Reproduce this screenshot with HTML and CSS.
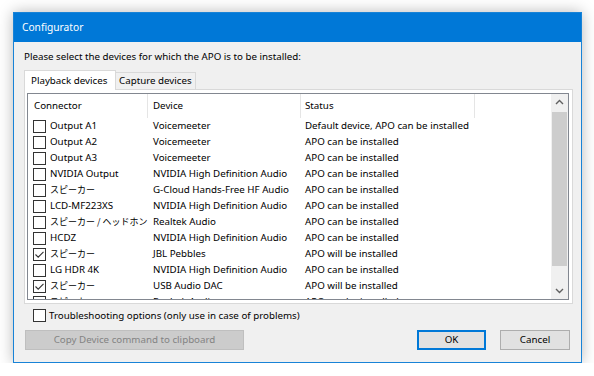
FILE: index.html
```html
<!DOCTYPE html>
<html>
<head>
<meta charset="utf-8">
<link rel="stylesheet" href="styles.css">
</head>
<body>
<div class="window">
  <div class="titlebar">Configurator</div>
  <div class="content">
    <div class="instr">Please select the devices for which the APO is to be installed:</div>
    <div class="tabs">
      <div class="tab active">Playback devices</div>
      <div class="tab">Capture devices</div>
    </div>
    <div class="panel">
      <div class="listview">
        <div class="lv-main">
          <div class="lv-header">
            <div class="hcell c1">Connector</div>
            <div class="hcell c2">Device</div>
            <div class="hcell c3">Status</div>
          </div>
          <div class="row"><div class="cell c1"><span class="cb"></span>Output A1</div><div class="cell c2">Voicemeeter</div><div class="cell c3">Default device, APO can be installed</div></div>
          <div class="row"><div class="cell c1"><span class="cb"></span>Output A2</div><div class="cell c2">Voicemeeter</div><div class="cell c3">APO can be installed</div></div>
          <div class="row"><div class="cell c1"><span class="cb"></span>Output A3</div><div class="cell c2">Voicemeeter</div><div class="cell c3">APO can be installed</div></div>
          <div class="row"><div class="cell c1"><span class="cb"></span>NVIDIA Output</div><div class="cell c2">NVIDIA High Definition Audio</div><div class="cell c3">APO can be installed</div></div>
          <div class="row"><div class="cell c1"><span class="cb"></span><span class="jp">スピーカー</span></div><div class="cell c2">G-Cloud Hands-Free HF Audio</div><div class="cell c3">APO can be installed</div></div>
          <div class="row"><div class="cell c1"><span class="cb"></span>LCD-MF223XS</div><div class="cell c2">NVIDIA High Definition Audio</div><div class="cell c3">APO can be installed</div></div>
          <div class="row"><div class="cell c1"><span class="cb"></span><span class="jp">スピーカー / ヘッドホン</span></div><div class="cell c2">Realtek Audio</div><div class="cell c3">APO can be installed</div></div>
          <div class="row"><div class="cell c1"><span class="cb"></span>HCDZ</div><div class="cell c2">NVIDIA High Definition Audio</div><div class="cell c3">APO can be installed</div></div>
          <div class="row"><div class="cell c1"><span class="cb"><svg viewBox="0 0 11 11" width="11" height="11"><path d="M1.5 5.5 L4.2 8.2 L9.5 2.8" fill="none" stroke="#333" stroke-width="1.1"/></svg></span><span class="jp">スピーカー</span></div><div class="cell c2">JBL Pebbles</div><div class="cell c3">APO will be installed</div></div>
          <div class="row"><div class="cell c1"><span class="cb"></span>LG HDR 4K</div><div class="cell c2">NVIDIA High Definition Audio</div><div class="cell c3">APO can be installed</div></div>
          <div class="row"><div class="cell c1"><span class="cb"><svg viewBox="0 0 11 11" width="11" height="11"><path d="M1.5 5.5 L4.2 8.2 L9.5 2.8" fill="none" stroke="#333" stroke-width="1.1"/></svg></span><span class="jp">スピーカー</span></div><div class="cell c2">USB Audio DAC</div><div class="cell c3">APO will be installed</div></div>
          <div class="row"><div class="cell c1"><span class="cb"></span><span class="jp">スピーカー</span></div><div class="cell c2">Realtek Audio</div><div class="cell c3">APO can be installed</div></div>
        </div>
        <div class="scrollbar">
          <div class="sb-btn"><svg viewBox="0 0 17 17" width="17" height="17"><path d="M5 10 L8.5 6.5 L12 10" fill="none" stroke="#606060" stroke-width="1.4"/></svg></div>
          <div class="sb-track"><div class="sb-thumb"></div></div>
          <div class="sb-btn"><svg viewBox="0 0 17 17" width="17" height="17"><path d="M5 7 L8.5 10.5 L12 7" fill="none" stroke="#606060" stroke-width="1.4"/></svg></div>
        </div>
      </div>
    </div>
    <div class="trouble"><span class="cb"></span>Troubleshooting options (only use in case of problems)</div>
    <div class="buttons">
      <div class="btn disabled">Copy Device command to clipboard</div>
      <div class="spacer"></div>
      <div class="btn default">OK</div>
      <div class="btn cancel">Cancel</div>
    </div>
  </div>
</div>
</body>
</html>
```
FILE: styles.css
```css
html, body {
  margin: 0;
  padding: 0;
  background: #ffffff;
}
body {
  padding: 12px 0 0 13px;
  font-family: "Noto Sans", "Noto Sans CJK JP", sans-serif;
  font-size: 9.75px;
  color: #000;
}
.window {
  width: 567px;
  height: 349px;
  border: 1px solid #1883d7;
  background: #f0f0f0;
  box-shadow: 0 0 14px rgba(0,0,0,0.28);
  display: flex;
  flex-direction: column;
}
.titlebar {
  height: 29px;
  background: #0078d7;
  color: #fff;
  font-size: 10.2px;
  line-height: 29px;
  padding-left: 8px;
  flex: none;
}
.content {
  padding: 7px 8px 12px 10px;
  display: flex;
  flex-direction: column;
  flex: 1;
  min-height: 0;
}
.instr {
  height: 16px;
  line-height: 16px;
  margin-bottom: 5px;
  white-space: nowrap;
  flex: none;
}
.tabs {
  display: flex;
  align-items: flex-end;
  height: 19px;
  border-bottom: 1px solid #d9d9d9;
  flex: none;
}
.tab {
  height: 16px;
  line-height: 16px;
  border: 1px solid #d9d9d9;
  border-bottom: none;
  border-left: none;
  background: #f0f0f0;
  padding: 0 3px 0 3px;
  white-space: nowrap;
}
.tab.active {
  height: 19px;
  line-height: 19px;
  border-left: 1px solid #d9d9d9;
  background: #fff;
  margin-bottom: -1px;
  width: 84px;
  padding: 0 0 0 6px;
}
.panel {
  height: 207px;
  flex: none;
  background: #fff;
  border: 1px solid #d9d9d9;
  border-top: none;
  padding: 3px 3px 3px 2px;
}
.listview {
  height: 205px;
  border: 1px solid #828790;
  display: flex;
  overflow: hidden;
  background: #fff;
}
.lv-main {
  flex: 1;
  overflow: hidden;
}
.lv-header {
  display: flex;
  height: 24px;
}
.hcell {
  height: 24px;
  line-height: 23px;
  border-right: 1px solid #e5e5e5;
  box-sizing: border-box;
  white-space: nowrap;
}
.c1 { width: 120px; padding-left: 6px; flex: none; box-sizing: border-box; }
.c2 { width: 153px; padding-left: 5px; flex: none; box-sizing: border-box; }
.c3 { width: 174px; padding-left: 4px; flex: none; box-sizing: border-box; }
.row {
  display: flex;
  height: 16px;
  line-height: 16px;
}
.cell {
  white-space: nowrap;
  overflow: hidden;
}
.row .c1 {
  display: flex;
  align-items: center;
  padding-left: 5px;
}
.jp {
  font-size: 9px;
  font-family: "Noto Sans CJK JP", "Noto Sans", sans-serif;
}
.cb {
  width: 11px;
  height: 11px;
  border: 1px solid #333;
  background: #fff;
  flex: none;
  margin-right: 4px;
  display: flex;
}
.scrollbar {
  width: 17px;
  flex: none;
  background: #f0f0f0;
  display: flex;
  flex-direction: column;
}
.sb-btn {
  height: 17px;
  flex: none;
}
.sb-btn svg { display: block; }
.sb-track {
  flex: 1;
  padding: 1px 1px 0 1px;
}
.sb-thumb {
  height: 154px;
  background: #cdcdcd;
}
.trouble {
  margin-top: 5px;
  height: 13px;
  display: flex;
  align-items: center;
  padding-left: 9px;
  white-space: nowrap;
  flex: none;
}
.trouble .cb { margin-right: 3px; }
.buttons {
  margin-top: 8px;
  display: flex;
  height: 20px;
  padding-right: 3px;
  flex: none;
}
.spacer { flex: 1; }
.btn {
  height: 18px;
  line-height: 18px;
  text-align: center;
  border: 1px solid #adadad;
  background: #e1e1e1;
  white-space: nowrap;
}
.btn.disabled {
  width: 217px;
  margin-left: 1px;
  background: #cccccc;
  border-color: #bfbfbf;
  color: #838383;
}
.btn.default {
  width: 67px;
  border-color: #0078d7;
  box-shadow: inset 0 0 0 1px #0078d7;
  margin-right: 14px;
}
.btn.cancel {
  width: 68px;
}
```
